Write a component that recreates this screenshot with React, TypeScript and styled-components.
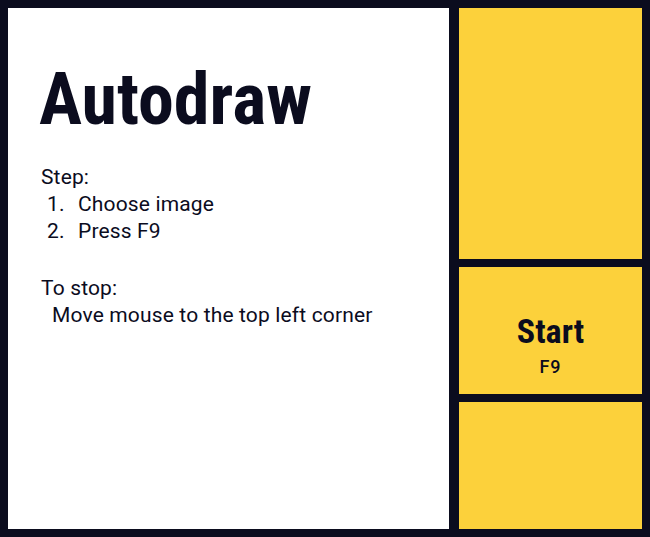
import React from "react";
import styled, { createGlobalStyle } from "styled-components";

const Global = createGlobalStyle`
  html, body { margin: 0; padding: 0; background: #0b0c1e; }
  body { font-family: Roboto, "Liberation Sans", sans-serif; }
`;

const Frame = styled.div`
  width: 650px;
  height: 537px;
  box-sizing: border-box;
  padding: 8px;
  background: #0b0c1e;
  display: grid;
  grid-template-columns: 441px 183px;
  column-gap: 10px;
`;

const Main = styled.main`
  background: #ffffff;
  color: #0b0c1e;
  padding: 56px 0 0 33px;
  box-sizing: border-box;
`;

const Title = styled.h1`
  margin: 0 0 28px -2px;
  font-family: "Roboto Condensed", Roboto, sans-serif;
  font-stretch: condensed;
  font-size: 72px;
  font-weight: 700;
  line-height: 1;
`;

const Text = styled.div`
  font-size: 21px;
  line-height: 27px;
  letter-spacing: 0.15px;
`;

const Steps = styled.ol`
  margin: 0 0 30px 0;
  padding: 0;
  list-style: none;
  counter-reset: step;
`;

const Step = styled.li`
  counter-increment: step;
  display: grid;
  grid-template-columns: 37px auto;
  &::before {
    content: counter(step) ".";
    padding-left: 6px;
  }
`;

const Indented = styled.div`
  padding-left: 11px;
`;

const Side = styled.div`
  display: grid;
  grid-template-rows: 251px 127px 127px;
  row-gap: 8px;
`;

const Panel = styled.div`
  background: #fcd13b;
  display: flex;
  flex-direction: column;
  align-items: center;
  justify-content: center;
  color: #0b0c1e;
`;

const StartPanel = styled(Panel)`
  padding-top: 29px;
`;

const ButtonLabel = styled.div`
  font-family: "Roboto Condensed", Roboto, sans-serif;
  font-stretch: condensed;
  font-size: 34px;
  font-weight: 700;
  line-height: 1;
`;

const Key = styled.div`
  font-size: 18px;
  font-weight: 500;
  line-height: 1;
  margin-top: 10px;
  letter-spacing: 1px;
`;

export default function App() {
  return (
    <>
      <Global />
      <Frame>
        <Main>
          <Title>Autodraw</Title>
          <Text>
            Step:
            <Steps>
              <Step>Choose image</Step>
              <Step>Press F9</Step>
            </Steps>
            To stop:
            <Indented>Move mouse to the top left corner</Indented>
          </Text>
        </Main>
        <Side>
          <Panel />
          <StartPanel>
            <ButtonLabel>Start</ButtonLabel>
            <Key>F9</Key>
          </StartPanel>
          <Panel />
        </Side>
      </Frame>
    </>
  );
}
